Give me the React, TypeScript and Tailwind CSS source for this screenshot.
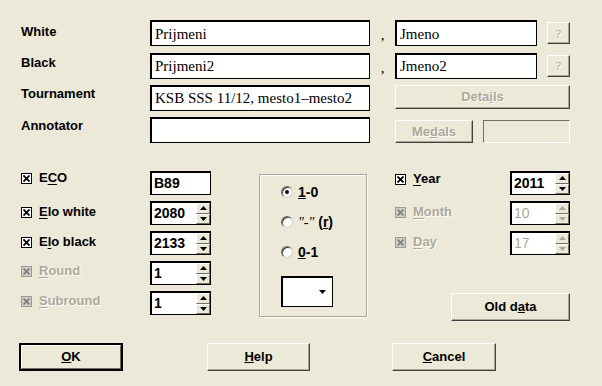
const sans = "font-['Arial','Liberation_Sans',sans-serif]";
const serif = "font-['Times_New_Roman','Liberation_Serif',serif]";

function Field({ value, w, className = "" }: { value?: string; w: string; className?: string }) {
  return (
    <div
      className={`${w} h-[26px] bg-white border border-black border-t-2 border-l-2 flex items-center pl-[3px] text-[15px] text-black ${serif} ${className}`}
    >
      {value}
    </div>
  );
}

function WinButton({
  children,
  className = "",
  disabled = false,
  isDefault = false,
}: {
  children?: React.ReactNode;
  className?: string;
  disabled?: boolean;
  isDefault?: boolean;
}) {
  return (
    <div className={`${className} ${isDefault ? "border-2 border-black" : ""} bg-[#ece9d8]`}>
      <div
        className={`w-full h-full flex items-center justify-center border border-t-white border-l-white ${
          isDefault ? "border-r-[#716f64] border-b-[#716f64]" : "border-r-[#404040] border-b-[#404040] shadow-[inset_-1px_-1px_0_#aca899]"
        } text-[13px] font-bold ${sans} ${disabled ? "text-[#aca899] [text-shadow:1px_1px_0_#fff]" : "text-black"}`}
      >
        {children}
      </div>
    </div>
  );
}

function Check({ disabled = false }: { disabled?: boolean }) {
  return (
    <div
      className={`w-[11px] h-[11px] border ${disabled ? "border-[#9a9a9a] bg-[#d4d0c8]" : "border-black bg-white"} flex items-center justify-center`}
    >
      <svg width="7" height="7" viewBox="0 0 7 7">
        <path
          d="M0.5 0.5 L6.5 6.5 M6.5 0.5 L0.5 6.5"
          stroke={disabled ? "#808080" : "#000"}
          strokeWidth="1.8"
        />
      </svg>
    </div>
  );
}

function CheckLabel({ u, rest, pre = "", disabled = false }: { u: string; rest: string; pre?: string; disabled?: boolean }) {
  return (
    <div className="flex items-center gap-[7px]">
      <Check disabled={disabled} />
      <span
        className={`text-[13px] font-bold ${sans} ${disabled ? "text-[#aca899] [text-shadow:1px_1px_0_#fff]" : "text-black"}`}
      >
        {pre}
        <span className="underline underline-offset-2">{u}</span>
        {rest}
      </span>
    </div>
  );
}

function SpinArrow({ up, disabled }: { up: boolean; disabled: boolean }) {
  return (
    <div className="flex-1 bg-[#ece9d8] border border-t-white border-l-white border-r-[#716f64] border-b-[#716f64] flex items-center justify-center">
      <svg width="7" height="4" viewBox="0 0 7 4">
        <path d={up ? "M0 4 L3.5 0 L7 4 Z" : "M0 0 L3.5 4 L7 0 Z"} fill={disabled ? "#aca899" : "#000"} />
      </svg>
    </div>
  );
}

function Spin({ value, disabled = false, w }: { value: string; disabled?: boolean; w: string }) {
  return (
    <div className={`${w} h-[24px] border border-black border-t-2 border-l-2 bg-white flex`}>
      <div
        className={`flex-1 flex items-center pl-[2px] text-[14px] font-bold ${sans} ${disabled ? "text-[#aca899] font-normal" : "text-black"}`}
      >
        {value}
      </div>
      <div className="w-[14px] flex flex-col">
        <SpinArrow up disabled={disabled} />
        <SpinArrow up={false} disabled={disabled} />
      </div>
    </div>
  );
}

function Radio({ on = false }: { on?: boolean }) {
  return (
    <div className="w-[12px] h-[12px] rounded-full bg-white border border-t-[#716f64] border-l-[#716f64] border-r-[#d4d0c8] border-b-[#d4d0c8] shadow-[inset_1px_1px_0_#404040] flex items-center justify-center">
      {on && <div className="w-[4px] h-[4px] rounded-full bg-black" />}
    </div>
  );
}

function RadioLabel({ on, children }: { on?: boolean; children: React.ReactNode }) {
  return (
    <div className="flex items-center gap-[5px] h-[16px]">
      <Radio on={on} />
      <span className={`text-[14px] leading-[16px] font-bold text-black ${sans}`}>{children}</span>
    </div>
  );
}

export default function App() {
  return (
    <div className={`w-[602px] h-[386px] bg-[#ece9d8] overflow-hidden ${sans}`}>
      {/* top fields */}
      <div className="pt-[20px] pl-[21px] flex flex-col gap-[6px]">
        {[
          ["White", "Prijmeni", "Jmeno"],
          ["Black", "Prijmeni2", "Jmeno2"],
        ].map(([l, a, b], i) => (
          <div key={l} className="flex items-center">
            <div className={`w-[129px] text-[13px] font-bold text-black ${i === 0 ? "-mt-[3px]" : "-mt-[6px]"}`}>{l}</div>
            <Field value={a} w="w-[220px]" />
            <div className={`w-[25px] text-center text-[15px] ${serif} pt-[4px]`}>,</div>
            <Field value={b} w="w-[142px]" />
            <div className="w-[10px]" />
            <WinButton disabled className="w-[23px] h-[22px]">
              <span className={`${serif} font-normal text-[13px]`}>?</span>
            </WinButton>
          </div>
        ))}
        <div className="flex items-center">
          <div className="w-[129px] text-[13px] font-bold text-black -mt-[8px]">Tournament</div>
          <Field value="KSB SSS 11/12, mesto1‒mesto2" w="w-[220px]" className="whitespace-nowrap overflow-hidden" />
          <div className="w-[25px]" />
          <WinButton disabled className="w-[175px] h-[24px] -mt-[2px]">
            Deta<span className="underline">i</span>ls
          </WinButton>
        </div>
        <div className="flex items-center">
          <div className="w-[129px] text-[13px] font-bold text-black -mt-[9px]">Annotator</div>
          <Field w="w-[220px]" />
          <div className="w-[25px]" />
          <WinButton disabled className="w-[78px] h-[23px] mt-[3px]">
            Me<span className="underline">d</span>als
          </WinButton>
          <div className="w-[10px]" />
          <div className="w-[87px] h-[23px] mt-[3px] border border-[#716f64] border-r-white border-b-white bg-[#ece9d8]" />
        </div>
      </div>

      {/* middle */}
      <div className="flex mt-[28px]">
        <div className="pl-[21px] flex flex-col gap-[6px]">
          <div className="flex items-center h-[24px]">
            <div className="w-[129px] -mt-[10px]">
              <CheckLabel pre="E" u="C" rest="O" />
            </div>
            <div className={`w-[61px] h-[24px] border border-black border-t-2 border-l-2 bg-white flex items-center pl-[2px] text-[14px] font-bold ${sans}`}>
              B89
            </div>
          </div>
          <div className="flex items-center h-[24px]">
            <div className="w-[129px] -mt-[2px]">
              <CheckLabel u="E" rest="lo white" />
            </div>
            <Spin value="2080" w="w-[61px]" />
          </div>
          <div className="flex items-center h-[24px]">
            <div className="w-[129px] -mt-[2px]">
              <CheckLabel pre="E" u="l" rest="o black" />
            </div>
            <Spin value="2133" w="w-[61px]" />
          </div>
          <div className="flex items-center h-[24px]">
            <div className="w-[129px] -mt-[4px]">
              <CheckLabel u="R" rest="ound" disabled />
            </div>
            <Spin value="1" w="w-[61px]" />
          </div>
          <div className="flex items-center h-[24px]">
            <div className="w-[129px] -mt-[4px]">
              <CheckLabel u="S" rest="ubround" disabled />
            </div>
            <Spin value="1" w="w-[61px]" />
          </div>
        </div>

        {/* result group */}
        <div className="ml-[48px] mt-[3px] w-[108px] h-[143px] border border-[#aca899] shadow-[inset_1px_1px_0_#fff,1px_1px_0_#fff] flex flex-col pl-[21px] pt-[9px] gap-[14px]">
          <RadioLabel on>
            <span className="underline">1</span>-0
          </RadioLabel>
          <RadioLabel>
            <span className={`${serif} italic font-normal`}>″-″</span>{" "}
            <span>
              (<span className="underline">r</span>)
            </span>
          </RadioLabel>
          <RadioLabel>
            <span className="underline">0</span>-1
          </RadioLabel>
          <div className="w-[52px] h-[31px] mt-[2px] bg-white border border-black border-t-2 border-l-2 flex items-center justify-end pr-[6px]">
            <svg width="7" height="4" viewBox="0 0 7 4">
              <path d="M0 0 L3.5 4 L7 0 Z" fill="#000" />
            </svg>
          </div>
        </div>

        {/* date */}
        <div className="ml-[28px] flex flex-col">
          <div className="flex flex-col gap-[6px]">
            <div className="flex items-center h-[24px]">
              <div className="w-[115px] -mt-[8px]">
                <CheckLabel u="Y" rest="ear" />
              </div>
              <Spin value="2011" w="w-[60px]" />
            </div>
            <div className="flex items-center h-[24px]">
              <div className="w-[115px] -mt-[2px]">
                <CheckLabel u="M" rest="onth" disabled />
              </div>
              <Spin value="10" w="w-[60px]" disabled />
            </div>
            <div className="flex items-center h-[24px]">
              <div className="w-[115px] -mt-[2px]">
                <CheckLabel u="D" rest="ay" disabled />
              </div>
              <Spin value="17" w="w-[60px]" disabled />
            </div>
          </div>
          <WinButton className="ml-[56px] mt-[38px] w-[119px] h-[28px]">
            Old d<span className="underline">a</span>ta
          </WinButton>
        </div>
      </div>

      {/* bottom buttons */}
      <div className="flex pl-[19px] mt-[22px]">
        <WinButton isDefault className="w-[104px] h-[28px]">
          <span className="underline">O</span>K
        </WinButton>
        <WinButton className="ml-[84px] w-[103px] h-[28px]">
          <span className="underline">H</span>elp
        </WinButton>
        <WinButton className="ml-[82px] w-[104px] h-[28px]">
          <span className="underline">C</span>ancel
        </WinButton>
      </div>
    </div>
  );
}
